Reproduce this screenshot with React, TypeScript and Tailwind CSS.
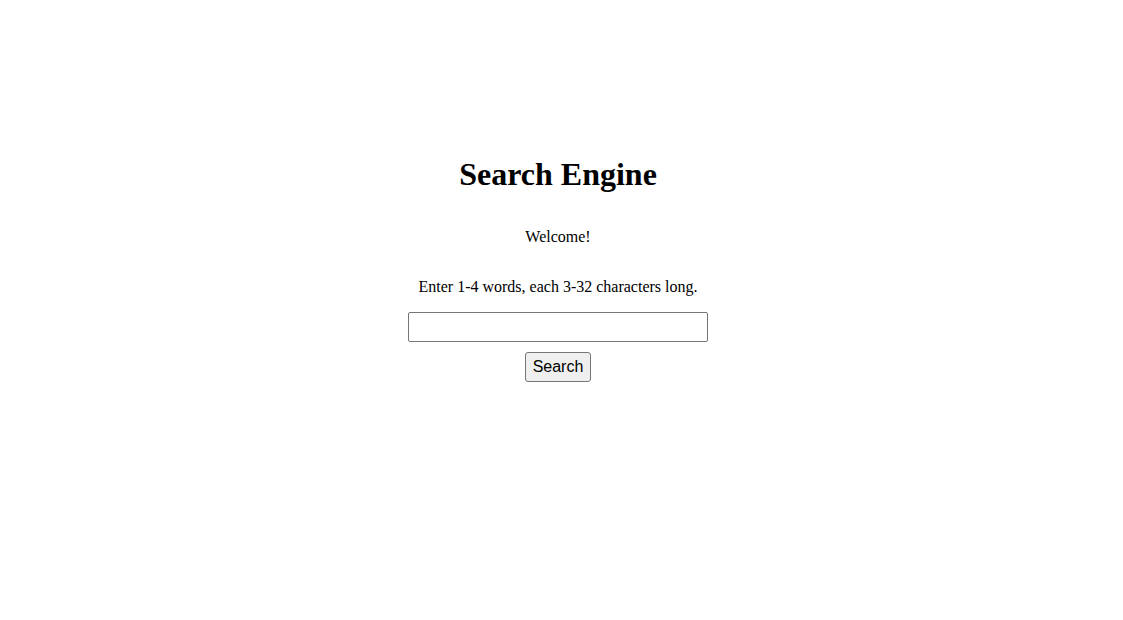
import React, { useState } from 'react';

const App = () => {
  const [query, setQuery] = useState('');

  return (
    <div className="min-h-[620px] w-full bg-white text-black font-['Liberation_Serif',serif]">
      <div className="flex flex-col items-center pt-[156px] pr-[7px]">
        <h1 className="text-[32px] font-bold leading-[37px]">Search Engine</h1>
        <p className="mt-[35px] text-[16px] leading-[18px]">Welcome!</p>
        <p className="mt-[32px] text-[16px] leading-[18px]">Enter 1-4 words, each 3-32 characters long.</p>
        <form
          className="mt-[16px] flex flex-col items-center"
          onSubmit={(e) => e.preventDefault()}
        >
          <input
            type="text"
            value={query}
            onChange={(e) => setQuery(e.target.value)}
            className="h-[30px] w-[300px] rounded-[2px] border border-[#767676] bg-white px-[2px] text-[16px] outline-none"
          />
          <button
            type="submit"
            className="mt-[10px] h-[30px] w-[66px] rounded-[3px] border border-[#767676] bg-[#efefef] font-['Liberation_Sans',Arial,sans-serif] text-[16px] leading-none text-black"
          >
            Search
          </button>
        </form>
      </div>
    </div>
  );
};

export default App;
